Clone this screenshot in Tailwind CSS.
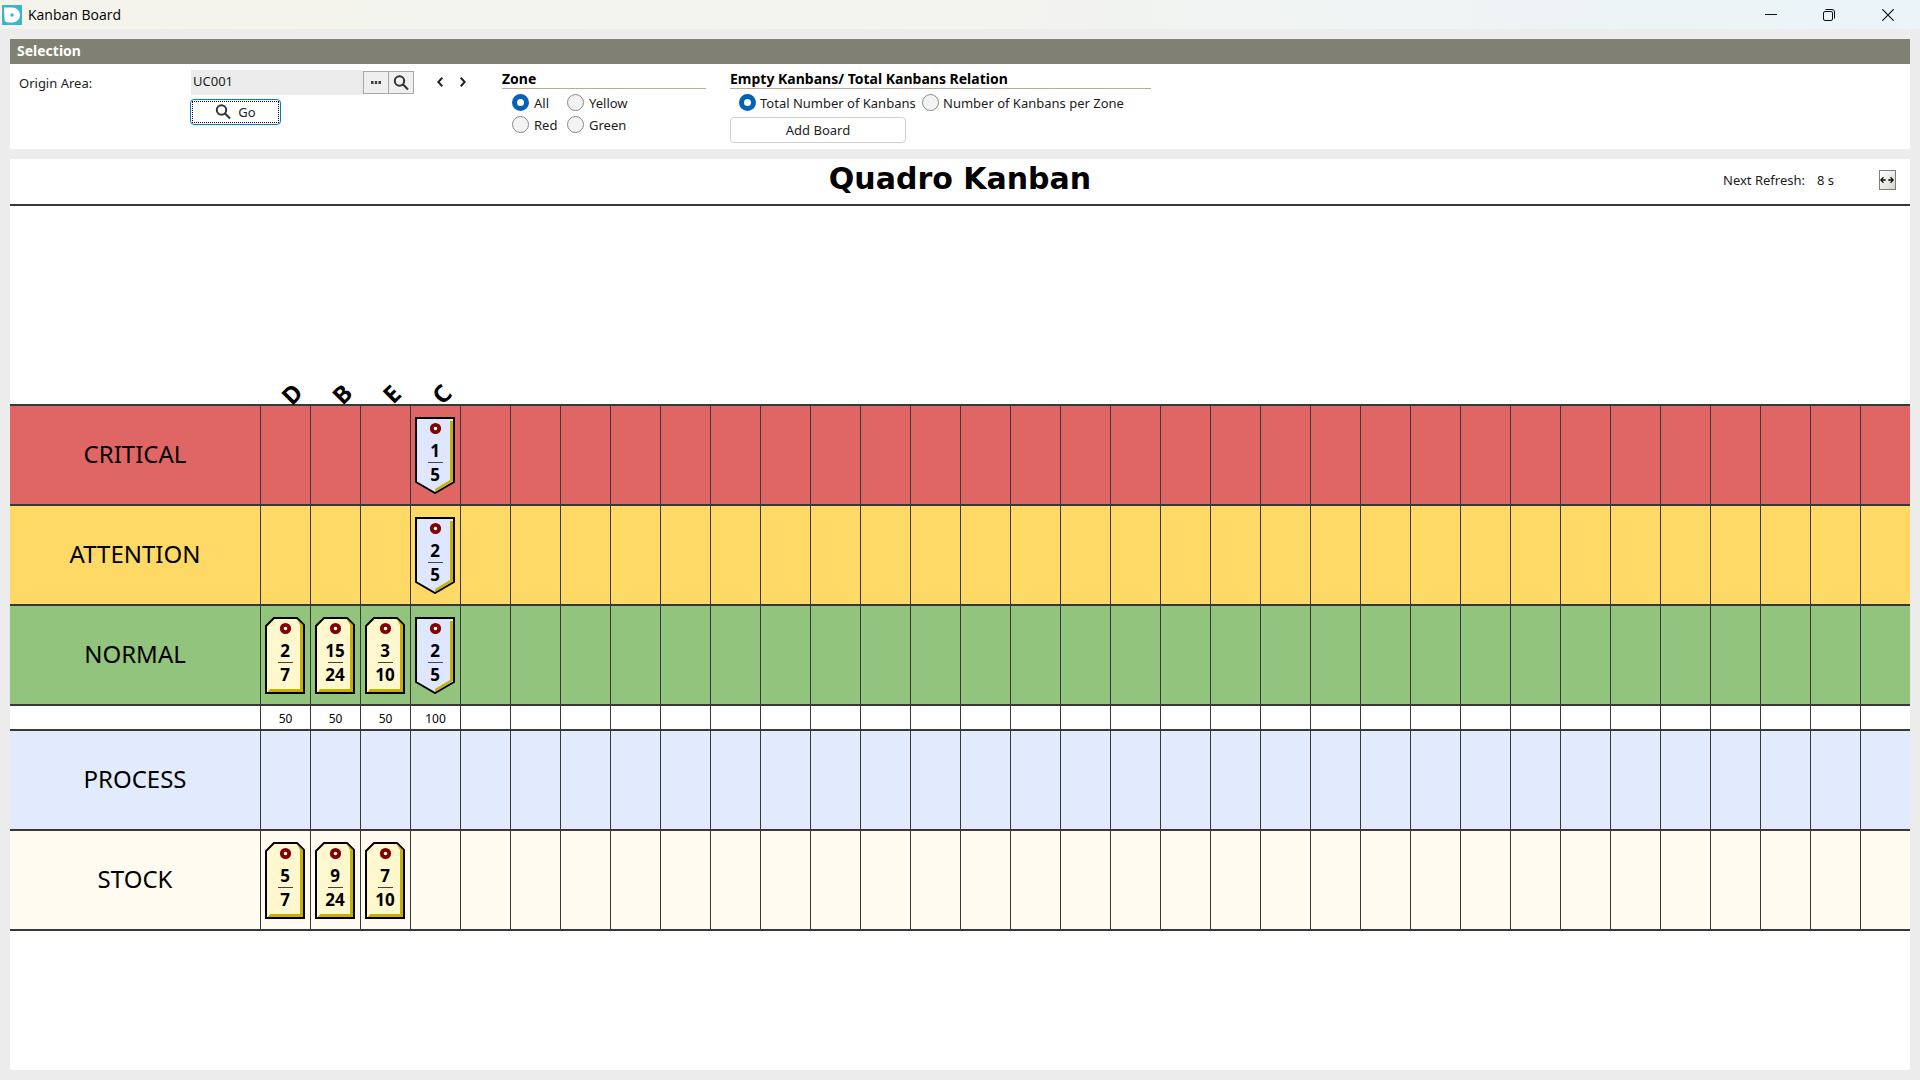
<!DOCTYPE html>
<html lang="en">
<head>
    <meta charset="UTF-8">
    <meta name="viewport" content="width=device-width, initial-scale=1.0">
    <title>Kanban Board</title>
    <script src="https://cdn.jsdelivr.net/npm/@tailwindcss/browser@4"></script>
</head>
<body class="flex min-h-screen flex-col bg-[#ececec] font-['Noto_Sans',sans-serif] text-[12px] leading-4 text-[#1c1c1c]">

    <!-- Title bar -->
    <header class="flex h-[29px] items-center justify-between bg-linear-to-r from-[#f4f4ec] via-[#f3f3ef] to-[#eaf4f9] pr-0.5 pl-0.5">
        <div class="flex items-center gap-1.5">
            <svg class="size-5" viewBox="0 0 20 20">
                <rect width="20" height="20" fill="#35b8cc"/>
                <path d="M2 2.5h8.5a7.3 7.3 0 0 1 0 15H6.500a4 4 0 0 1-4-4z" fill="#fff"/>
                <circle cx="10" cy="10" r="1.700" fill="#35b8cc"/>
            </svg>
            <h1 class="font-['Open_Sans',sans-serif] text-[14px] text-black">Kanban Board</h1>
        </div>
        <div class="flex">
            <button class="flex h-7 w-[58px] items-center justify-center" aria-label="Minimize">
                <svg class="size-3" viewBox="0 0 12 12" stroke="#111"><path d="M0 5.500h12"/></svg>
            </button>
            <button class="flex h-7 w-[58px] items-center justify-center" aria-label="Restore">
                <svg class="size-3" viewBox="0 0 12 12" fill="none" stroke="#111"><rect x=".5" y="2.500" width="9" height="9" rx="1.500"/><path d="M2.500.5H9A2.500 2.500 0 0 1 11.500 3v6.500"/></svg>
            </button>
            <button class="flex h-7 w-[60px] items-center justify-center" aria-label="Close">
                <svg class="size-3" viewBox="0 0 12 12" stroke="#111" stroke-width="1.200"><path d="M.3.3l11.400 11.400M11.700.3L.3 11.700"/></svg>
            </button>
        </div>
    </header>

    <main class="flex grow flex-col gap-2.5 p-2.5">

        <!-- Selection -->
        <form class="bg-white" onsubmit="return false">
            <h2 class="h-[25px] bg-[#818173] px-[7px] text-[14px] leading-6 font-bold text-white">Selection</h2>
            <div class="flex h-[85px] items-start pl-[9px] text-[13px]">
                <label for="area" class="w-[172px] pt-[11px]">Origin Area:</label>
                <div class="w-[311px] pt-1.5">
                    <div class="flex h-[25px] items-center">
                        <input id="area" value="UC001" class="h-[25px] w-[172px] bg-[#ececec] px-0.5 pb-1 outline-none">
                        <button type="button" class="flex h-[23px] w-[26px] items-center justify-center border border-[#a8a8a8] bg-[#efefef]" aria-label="Browse">
                            <svg class="h-[3px] w-3" viewBox="0 0 12 3" fill="#444"><rect x="1" width="2.500" height="3"/><rect x="4.750" width="2.500" height="3"/><rect x="8.500" width="2.500" height="3"/></svg>
                        </button>
                        <button type="button" class="-ml-px flex h-[23px] w-[26px] items-center justify-center border border-[#a8a8a8] bg-[#efefef]" aria-label="Search">
                            <svg class="size-4" viewBox="0 0 16 16" fill="none" stroke="#333" stroke-width="2"><circle cx="6.500" cy="6" r="4.700"/><path d="M9.800 9.300l5.200 5.200"/></svg>
                        </button>
                        <button type="button" class="ml-5 flex h-5 w-3 items-center justify-center pb-0.5" aria-label="Previous">
                            <svg class="h-2.5 w-1.5" viewBox="0 0 6 10" fill="none" stroke="#222" stroke-width="2"><path d="M5.300.8L1.300 5l4 4.200"/></svg>
                        </button>
                        <button type="button" class="ml-[11px] flex h-5 w-3 items-center justify-center pb-0.5" aria-label="Next">
                            <svg class="h-2.5 w-1.5" viewBox="0 0 6 10" fill="none" stroke="#222" stroke-width="2"><path d="M.7.8l4 4.200-4 4.200"/></svg>
                        </button>
                    </div>
                    <button class="mt-1 -ml-px h-[26px] w-[91px] rounded-[4px] border border-[#0078d4] bg-white p-px">
                        <span class="flex h-full items-center justify-center gap-[7px] border border-dotted border-black">
                            <svg class="size-4" viewBox="0 0 16 16" fill="none" stroke="#333" stroke-width="2"><circle cx="6.500" cy="6" r="4.700"/><path d="M9.800 9.300l5.200 5.200"/></svg>
                            Go
                        </span>
                    </button>
                </div>
                <fieldset class="mr-6 w-[204px]">
                    <legend class="h-[25px] w-full border-b border-[#b5ad98] pt-[7px] text-[14px] font-bold text-black">Zone</legend>
                    <div class="grid grid-cols-[55px_1fr] gap-y-[5px] pt-[5px] pl-2.5">
                        <label class="flex h-[17px] items-center gap-[5px]"><input type="radio" name="zone" checked class="size-[17px] appearance-none rounded-full border border-[#8a8a8a] bg-[#f3f3f3] checked:border-[5px] checked:border-[#0560b8] checked:bg-white">All</label>
                        <label class="flex h-[17px] items-center gap-[5px]"><input type="radio" name="zone" class="size-[17px] appearance-none rounded-full border border-[#8a8a8a] bg-[#f3f3f3] checked:border-[5px] checked:border-[#0560b8] checked:bg-white">Yellow</label>
                        <label class="flex h-[17px] items-center gap-[5px]"><input type="radio" name="zone" class="size-[17px] appearance-none rounded-full border border-[#8a8a8a] bg-[#f3f3f3] checked:border-[5px] checked:border-[#0560b8] checked:bg-white">Red</label>
                        <label class="flex h-[17px] items-center gap-[5px]"><input type="radio" name="zone" class="size-[17px] appearance-none rounded-full border border-[#8a8a8a] bg-[#f3f3f3] checked:border-[5px] checked:border-[#0560b8] checked:bg-white">Green</label>
                    </div>
                </fieldset>
                <fieldset class="w-[421px]">
                    <legend class="h-[25px] w-full border-b border-[#b5ad98] pt-[7px] text-[14px] font-bold text-black">Empty Kanbans/ Total Kanbans Relation</legend>
                    <div class="grid grid-cols-[183px_1fr] pt-[5px] pl-[9px]">
                        <label class="flex h-[17px] items-center gap-1"><input type="radio" name="relation" checked class="size-[17px] appearance-none rounded-full border border-[#8a8a8a] bg-[#f3f3f3] checked:border-[5px] checked:border-[#0560b8] checked:bg-white">Total Number of Kanbans</label>
                        <label class="flex h-[17px] items-center gap-1"><input type="radio" name="relation" class="size-[17px] appearance-none rounded-full border border-[#8a8a8a] bg-[#f3f3f3] checked:border-[5px] checked:border-[#0560b8] checked:bg-white">Number of Kanbans per Zone</label>
                    </div>
                    <button type="button" class="mt-1.5 h-[26px] w-[176px] rounded-[4px] border border-[#d0d0d0] bg-white">Add Board</button>
                </fieldset>
            </div>
        </form>

        <!-- Board -->
        <section class="grow bg-white">
            <div class="grid h-[47px] grid-cols-3 items-center border-b-2 border-[#383838]">
                <h2 class="col-start-2 pb-1.5 text-center font-['DejaVu_Sans',sans-serif] text-[30px] leading-9 font-bold text-black">Quadro Kanban</h2>
                <div class="flex items-center justify-end pr-3.5 pb-1 text-[13px]">
                    <span class="mr-3">Next Refresh:</span>
                    <span class="w-[62px]">8 s</span>
                    <button class="flex h-5 w-[17px] items-center justify-center border border-[#7d7d7d] bg-linear-to-br from-white to-[#d8d8d0]" aria-label="Fit width">
                        <svg class="h-2 w-3.5" viewBox="0 0 14 8" fill="none" stroke="#111" stroke-width="1.300"><path d="M.8 4h5M8.200 4h5M3.500 1.300L.8 4l2.700 2.700M10.500 1.300L13.200 4l-2.700 2.700"/></svg>
                    </button>
                </div>
            </div>
            <table class="w-full table-fixed border-separate border-spacing-0 text-black">
                <thead><tr id="heads"></tr></thead>
                <tbody id="zones"></tbody>
            </table>
        </section>
    </main>

    <script>
        const COLUMNS = 33;
        const products = ['D', 'B', 'E', 'C'];
        const zones = [
            { name: 'CRITICAL', color: 'bg-[#e06666]', cards: [null, null, null, [1, 5]] },
            { name: 'ATTENTION', color: 'bg-[#ffd966]', cards: [null, null, null, [2, 5]] },
            { name: 'NORMAL', color: 'bg-[#93c47d]', cards: [[2, 7], [15, 24], [3, 10], [2, 5]] },
            { lots: [50, 50, 50, 100] },
            { name: 'PROCESS', color: 'bg-[#e1ebfd]', cards: [] },
            { name: 'STOCK', color: 'bg-[#fffbf0]', cards: [[5, 7], [9, 24], [7, 10]] }
        ];

        // Card outlines: square tag for most products, pointed one for product C
        const tagShape = `
            <path d="M1 9L9 1h23l7 7v68H1z" fill="#fff8cf" stroke="#000" stroke-width="2"/>
            <path d="M32 2l6 6v67H3l2-3h30V8z" fill="#c8b000"/>`;
        const arrowShape = `
            <path d="M1 1h38v64L20 76 1 65z" fill="#dfe7ff" stroke="#000" stroke-width="2"/>
            <path d="M35 4h3v60L20 75v-3l15-9z" fill="#c8b000"/>`;
        const hole = `
            <circle cx="20.500" cy="11.500" r="3.700" fill="#fff" stroke="#850000" stroke-width="3.800"/>
            <path d="M18 9l1 1M23 9l-1 1M18 14l1-1M23 14l-1-1" stroke="#850000" stroke-width="1.500"/>`;

        function card([empty, total], pointed) {
            return `<div class="relative ml-1 h-[77px] w-10">
                <svg class="absolute inset-0 h-full w-full" viewBox="0 0 40 77">${pointed ? arrowShape : tagShape}${hole}</svg>
                <div class="relative flex flex-col items-center pt-[26px] text-[17px] leading-4 font-bold">
                    <span>${empty}</span>
                    <span class="mt-[3px] mb-1 h-px w-[15px] bg-[#444]"></span>
                    <span>${total}</span>
                </div>
            </div>`;
        }

        // Product names stand diagonally above their columns
        let heads = '<td class="h-[198px] w-[250px]"></td>';
        for (let i = 0; i < COLUMNS; i++) {
            heads += products[i]
                ? `<th class="p-0 pl-3.5 align-bottom text-[24px] leading-5"><span class="inline-block -rotate-45">${products[i]}</span></th>`
                : '<td></td>';
        }
        document.getElementById('heads').innerHTML = heads;

        document.getElementById('zones').innerHTML = zones.map((zone, index) => {
            const last = index === zones.length - 1;
            let row = '';
            for (let i = 0; i < COLUMNS; i++) {
                if (zone.lots) {
                    row += `<td class="border-t-2 border-l border-[#383838] p-0 pt-0.5 text-center">${zone.lots[i] || ''}</td>`;
                } else {
                    row += `<td class="${last ? 'border-b-2' : ''} border-t-2 border-l border-[#383838] p-0 pt-[11px] align-top">${zone.cards[i] ? card(zone.cards[i], products[i] === 'C') : ''}</td>`;
                }
            }
            if (zone.lots) {
                return `<tr><td class="h-[25px] border-t-2 border-[#383838] p-0"></td>${row}</tr>`;
            }
            return `<tr class="${zone.color}"><th scope="row" class="${last ? 'h-[102px] border-b-2' : 'h-[100px]'} border-t-2 border-[#383838] p-0 pb-0.5 text-[24px] leading-8 font-normal">${zone.name}</th>${row}</tr>`;
        }).join('');
    </script>
</body>
</html>
